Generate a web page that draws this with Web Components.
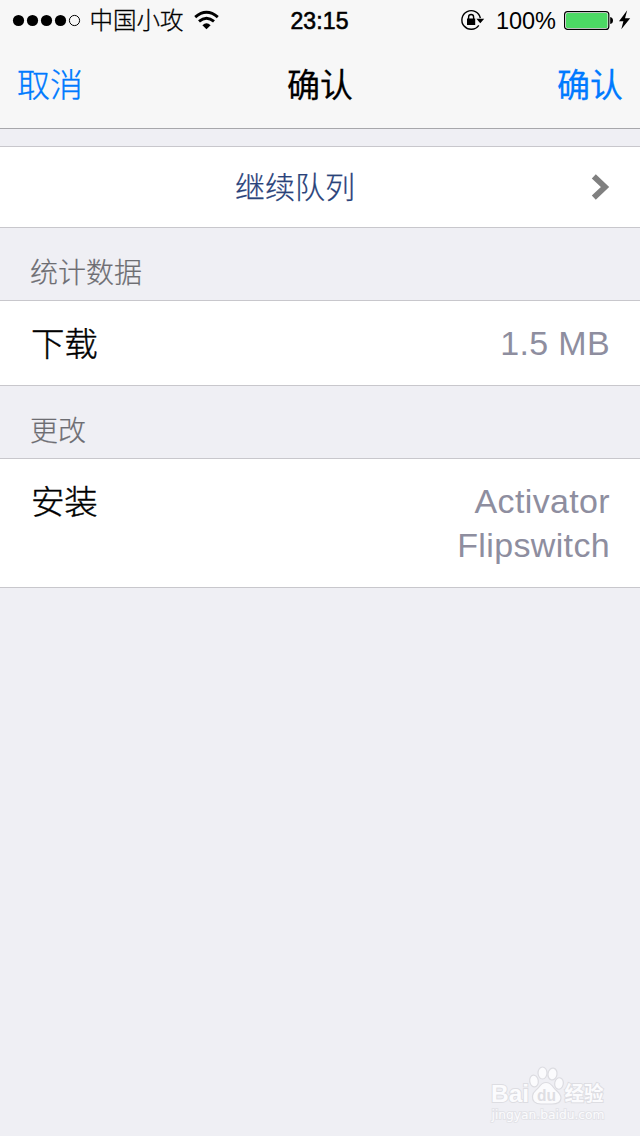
<!DOCTYPE html>
<html lang="zh-CN">
<head>
    <meta charset="UTF-8">
    <meta name="viewport" content="width=device-width, initial-scale=1.0">
    <title>确认</title>
    <style>
        html, body {height: 100%}
        body {
            margin: 0;
            background: #efeff4;
            color: #000;
            font-family: "Liberation Sans", "Noto Sans CJK SC", sans-serif;
        }
    </style>
</head>
<body>
    <confirm-page></confirm-page>

    <template id="status-template">
        <style>
            :host {display: grid; grid-template-columns: 1fr auto 1fr; align-items: center; height: 41px; padding: 0 8px 0 12px; box-sizing: border-box; font-size: 24px; line-height: 40px}
            div {display: flex; align-items: center}
            svg {display: block; flex: none}
            .carrier {margin: 0 10.5px 0 8.5px; font-weight: 300; font-size: 23.5px; line-height: 42px; height: 41px; -webkit-text-stroke: .3px #000}
            .time {margin-right: 5px; font-size: 23px; -webkit-text-stroke: .6px #000; letter-spacing: .1px}
            .right {justify-content: flex-end}
            .percent {margin: 0 8px 0 11px; font-size: 23.5px}
        </style>
        <div>
            <svg width="69" height="41" viewBox="0 0 69 41">
                <circle cx="6.5" cy="20.5" r="5.6"/><circle cx="20.5" cy="20.5" r="5.6"/>
                <circle cx="34.5" cy="20.5" r="5.6"/><circle cx="48.5" cy="20.5" r="5.6"/>
                <circle cx="62.5" cy="20.5" r="5.1" fill="none" stroke="#000"/>
            </svg>
            <span class="carrier"><slot name="carrier"></slot></span>
            <svg width="25" height="41" viewBox="0 0 25 41" fill="none" stroke="#000" stroke-width="2.9">
                <path d="M1.2 17.2Q12.5 7.5 23.8 17.2M5 21.4Q12.5 15 20 21.4"/>
                <path d="M8.4 25.2Q12.5 21.2 16.6 25.2L12.5 29.2Z" fill="#000" stroke="none"/>
            </svg>
        </div>
        <span class="time"><slot name="time"></slot></span>
        <div class="right">
            <svg width="25" height="41" viewBox="0 0 25 41">
                <path d="M18.8 25.3A9.3 9.3 0 1 1 20.3 18.2" fill="none" stroke="#000" stroke-width="1.4"/>
                <path d="M16.4 18.8H24.2L20.3 23.2Z"/>
                <path d="M7 18.5H15.2V25H7Z"/>
                <path d="M8.6 19V17A2.5 2.5 0 0 1 13.6 17V19" fill="none" stroke="#000" stroke-width="1.4"/>
            </svg>
            <span class="percent"><slot name="percent"></slot></span>
            <svg width="68" height="41" viewBox="0 0 68 41">
                <rect x=".6" y="11.6" width="44.2" height="17.8" rx="3" fill="#fff" stroke="#000" stroke-width="1.2"/>
                <rect x="2" y="13" width="41.5" height="15" rx="1.5" fill="#4cd964"/>
                <path d="M46.2 17Q49 17.5 49 20.5T46.2 24Z"/>
                <path d="M63.2 10.3L55 21.3H59.4L57.3 29.3L66.2 18.2H61Z"/>
            </svg>
        </div>
    </template>

    <template id="nav-template">
        <style>
            :host {display: grid; grid-template-columns: 1fr auto 1fr; height: 88px; box-sizing: border-box; padding: 2px 16px 0; border-bottom: 1px solid #a7a7ab; font-size: 33px; line-height: 86px; font-weight: 400; -webkit-text-stroke: .25px}
            .left, .right {color: #007aff}
            .left {padding-left: 1px; font-weight: 300; -webkit-text-stroke: .3px}
            .right {padding-right: 1px; text-align: right}
        </style>
        <span class="left"><slot name="left"></slot></span>
        <span class="title"><slot></slot></span>
        <span class="right"><slot name="right"></slot></span>
    </template>

    <template id="section-template">
        <style>
            :host {display: block}
            header {height: 72px; box-sizing: border-box; padding: 26px 30px 0; font-size: 28px; line-height: 40px; font-weight: 300; color: #6d6d72; -webkit-text-stroke: .2px}
        </style>
        <header></header>
        <slot></slot>
    </template>

    <template id="row-template">
        <style>
            :host {display: flex; justify-content: space-between; box-sizing: border-box; min-height: 86px; padding: 20px 30px; background: #fff; border: solid #c8c7cc; border-width: 1px 0; font-size: 34px; line-height: 44px}
            .label {font-weight: 300; font-size: 33.5px; margin-left: 1px; padding-top: 2px; margin-bottom: -2px; letter-spacing: -.3px; -webkit-text-stroke: .4px}
            .value {color: #8e8e9f; text-align: right; letter-spacing: .35px}
        </style>
        <span class="label"></span>
        <div class="value"><slot></slot></div>
    </template>

    <template id="queue-template">
        <style>
            :host {display: grid; grid-template-columns: 1fr 20px; align-items: center; height: 82px; box-sizing: border-box; margin-top: 17px; padding: 0 30px 0 0; background: #fff; border: solid #c8c7cc; border-width: 1px 0; color: #29427a; font-size: 30px; line-height: 82px; font-weight: 300; text-align: center; -webkit-text-stroke: .25px}
            span {height: 80px}
            svg {display: block}
        </style>
        <span><slot></slot></span>
        <svg width="20" height="28" viewBox="0 0 20 28"><path d="M3.8 3.3L15 14L3.8 24.7" fill="none" stroke="#808080" stroke-width="5.8"/></svg>
    </template>

    <template id="mark-template">
        <style>
            :host {display: block; width: 124px; height: 62px}
            svg {display: block}
            text {fill: #fbfbfd; stroke: #dddde2; stroke-width: 1.8px; paint-order: stroke}
        </style>
        <svg width="124" height="62" viewBox="0 0 124 62">
            <g fill="#fbfbfd" stroke="#dcdce1" stroke-width="1.2">
                <ellipse cx="48" cy="19" rx="4.3" ry="6" transform="rotate(-8 48 19)"/>
                <ellipse cx="56.5" cy="11" rx="4.5" ry="6"/>
                <ellipse cx="66.5" cy="12" rx="4.5" ry="6" transform="rotate(10 66.5 12)"/>
                <ellipse cx="73" cy="21.5" rx="4.3" ry="5.8" transform="rotate(10 73 21.5)"/>
                <path d="M60 20.5C64 20.5 66 23 68 26S75 31 75 36S71 42 66 42H55C49 42 46 39 46.5 34S51 28 53 25S57 20.5 60 20.5Z"/>
            </g>
            <text x="5" y="40" font-size="24" font-weight="700" textLength="38" lengthAdjust="spacingAndGlyphs">Bai</text>
            <text x="51" y="38.5" font-size="17" font-weight="700" textLength="19" lengthAdjust="spacingAndGlyphs" style="fill: #dedee3; stroke: none">du</text>
            <text x="78.5" y="39" font-size="20" font-weight="700" textLength="39" lengthAdjust="spacingAndGlyphs">经验</text>
            <text x="5.5" y="56.5" font-size="12" textLength="113" lengthAdjust="spacingAndGlyphs" style="font-family: 'DejaVu Sans', sans-serif; stroke: #e3e3e8">jingyan.baidu.com</text>
        </svg>
    </template>

    <template id="page-template">
        <style>
            :host {display: flex; flex-direction: column; height: 1136px; overflow: hidden}
            .top {background: #f7f7f7}
            baidu-mark {margin: auto 30px 12px auto}
        </style>
        <div class="top">
            <status-bar>
                <span slot="carrier">中国小攻</span>
                <span slot="time">23:15</span>
                <span slot="percent">100%</span>
            </status-bar>
            <nav-bar>
                <span slot="left">取消</span>
                确认
                <span slot="right">确认</span>
            </nav-bar>
        </div>
        <queue-button>继续队列</queue-button>
        <table-section title="统计数据">
            <table-row label="下载">1.5 MB</table-row>
        </table-section>
        <table-section title="更改">
            <table-row label="安装">Activator<br>Flipswitch</table-row>
        </table-section>
        <baidu-mark></baidu-mark>
    </template>

    <script>
        // template 을 복사해서 shadow DOM 에 넣는 공통 클래스
        class TemplateElement extends HTMLElement {
            connectedCallback(){
                if (this.shadowRoot) return;
                this.attachShadow({mode : 'open'});
                let template = document.getElementById(this.constructor.template);
                this.shadowRoot.append(template.content.cloneNode(true));
                this.render();
            }
            render(){}
        }

        class StatusBar extends TemplateElement {
            static template = 'status-template';
        }

        class NavBar extends TemplateElement {
            static template = 'nav-template';
        }

        class QueueButton extends TemplateElement {
            static template = 'queue-template';
        }

        class TableSection extends TemplateElement {
            static template = 'section-template';
            render(){
                this.shadowRoot.querySelector('header').textContent = this.getAttribute('title');
            }
        }

        class TableRow extends TemplateElement {
            static template = 'row-template';
            render(){
                this.shadowRoot.querySelector('.label').textContent = this.getAttribute('label');
            }
        }

        class BaiduMark extends TemplateElement {
            static template = 'mark-template';
        }

        class ConfirmPage extends TemplateElement {
            static template = 'page-template';
        }

        customElements.define('status-bar', StatusBar);
        customElements.define('nav-bar', NavBar);
        customElements.define('queue-button', QueueButton);
        customElements.define('table-section', TableSection);
        customElements.define('table-row', TableRow);
        customElements.define('baidu-mark', BaiduMark);
        customElements.define('confirm-page', ConfirmPage);
    </script>
</body>
</html>
